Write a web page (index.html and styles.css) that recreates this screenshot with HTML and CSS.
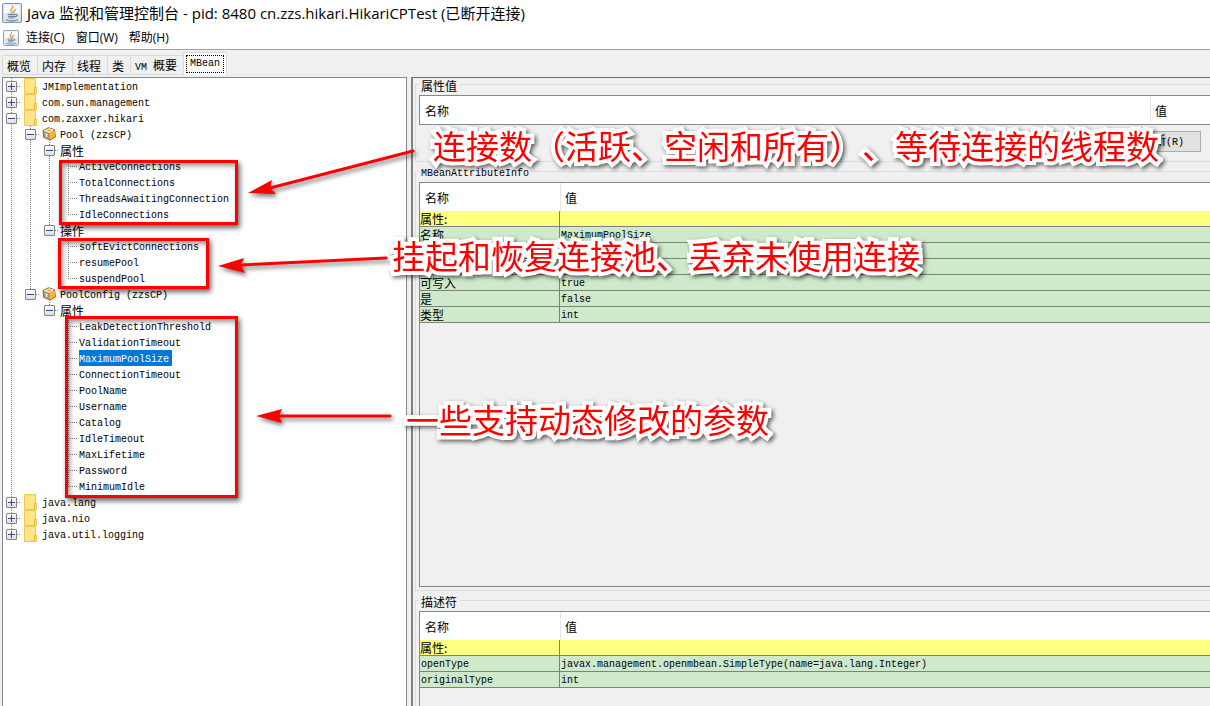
FILE: index.html
```
<!DOCTYPE html>
<html lang="zh-CN">
<head>
<meta charset="utf-8">
<title>Java 监视和管理控制台</title>
<link rel="stylesheet" href="styles.css">
</head>
<body>
<svg class="defs" aria-hidden="true">
  <symbol id="java" viewBox="0 0 18 18">
    <rect x=".5" y=".5" width="17" height="17" rx="1.500" fill="#dfe7ee" stroke="#8095a8"/>
    <rect x="1.5" y="1.5" width="15" height="8" fill="#f6f9fb"/>
    <path d="M9.500 9C5.500 6.500 10.500 5.500 9.500 2.500M11 9c-2-1.500 1-2 1.500-3.500" fill="none" stroke="#e8903b" stroke-width="1.200"/>
    <path d="M5 10.200h7M5.500 12h6M6 13.500h5M12 10.200c2.500-.7 2 2-.5 2.300M3.500 15c3 1.200 8 1.200 11 0" fill="none" stroke="#6283a0" stroke-width="1"/>
  </symbol>
  <symbol id="folder" viewBox="0 0 13 16">
    <path d="M.5 .5h11v9h1v6H.5z" fill="#ffe48c" stroke="#eec94b"/>
    <path d="M10.500 15.500v-6h2" fill="none" stroke="#e3b932"/>
  </symbol>
  <symbol id="bean" viewBox="0 0 13 13">
    <path d="M1 3.500L6 .8l5.500 1.700L12.500 9 7.500 12.300 1.500 9.500z" fill="#e9a13a" stroke="#8d6a35"/>
    <path d="M1.500 3.800l5.500 2v6.200L1.800 9.300z" fill="#9c927f"/>
    <path d="M7 5.800l4.800-2.500L12.200 8.700 7.300 11.800z" fill="#ffb32e"/>
    <path d="M3 3.500l3.500-1.800 3.500 1-3 2zM3 6l2 3M5.200 6.500L3.400 9" fill="none" stroke="#fff3d8"/>
  </symbol>
</svg>

<header class="titlebar"><svg class="app-icon"><use href="#java"/></svg><h1>Java 监视和管理控制台 - pid: 8480 cn.zzs.hikari.HikariCPTest (已断开连接)</h1></header>
<nav class="menubar">
  <svg class="menu-icon"><use href="#java"/></svg>
  <button>连接(C)</button><button>窗口(W)</button><button>帮助(H)</button>
</nav>
<div class="tabs" role="tablist">
  <button role="tab" class="tab">概览</button><button role="tab" class="tab">内存</button><button role="tab" class="tab">线程</button><button role="tab" class="tab">类</button><button role="tab" class="tab"><span class="mono">VM </span>概要</button><button role="tab" class="tab selected" aria-selected="true"><span class="mono focus">MBean</span></button>
</div>

<main class="content">
  <section class="tree-pane">
    <ul class="tree">
      <li><div class="row"><span class="joint"><button class="toggle plus" aria-label="展开"></button></span><svg class="folder"><use href="#folder"/></svg><span class="label">JMImplementation</span></div></li>
      <li><div class="row"><span class="joint"><button class="toggle plus" aria-label="展开"></button></span><svg class="folder"><use href="#folder"/></svg><span class="label">com.sun.management</span></div></li>
      <li><div class="row"><span class="joint"><button class="toggle" aria-label="折叠"></button></span><svg class="folder"><use href="#folder"/></svg><span class="label">com.zaxxer.hikari</span></div>
        <ul>
          <li><div class="row"><span class="joint"><button class="toggle" aria-label="折叠"></button></span><svg class="bean"><use href="#bean"/></svg><span class="label">Pool (zzsCP)</span></div>
            <ul>
              <li><div class="row"><span class="joint"><button class="toggle" aria-label="折叠"></button></span><span class="label cjk">属性</span></div>
                <ul>
                  <li><div class="row"><span class="joint leaf"></span><span class="label">ActiveConnections</span></div></li>
                  <li><div class="row"><span class="joint leaf"></span><span class="label">TotalConnections</span></div></li>
                  <li><div class="row"><span class="joint leaf"></span><span class="label">ThreadsAwaitingConnection</span></div></li>
                  <li><div class="row"><span class="joint leaf"></span><span class="label">IdleConnections</span></div></li>
                </ul>
              </li>
              <li><div class="row"><span class="joint"><button class="toggle" aria-label="折叠"></button></span><span class="label cjk">操作</span></div>
                <ul>
                  <li><div class="row"><span class="joint leaf"></span><span class="label">softEvictConnections</span></div></li>
                  <li><div class="row"><span class="joint leaf"></span><span class="label">resumePool</span></div></li>
                  <li><div class="row"><span class="joint leaf"></span><span class="label">suspendPool</span></div></li>
                </ul>
              </li>
            </ul>
          </li>
          <li><div class="row"><span class="joint"><button class="toggle" aria-label="折叠"></button></span><svg class="bean"><use href="#bean"/></svg><span class="label">PoolConfig (zzsCP)</span></div>
            <ul>
              <li><div class="row"><span class="joint"><button class="toggle" aria-label="折叠"></button></span><span class="label cjk">属性</span></div>
                <ul>
                  <li><div class="row"><span class="joint leaf"></span><span class="label">LeakDetectionThreshold</span></div></li>
                  <li><div class="row"><span class="joint leaf"></span><span class="label">ValidationTimeout</span></div></li>
                  <li><div class="row"><span class="joint leaf"></span><span class="label current">MaximumPoolSize</span></div></li>
                  <li><div class="row"><span class="joint leaf"></span><span class="label">ConnectionTimeout</span></div></li>
                  <li><div class="row"><span class="joint leaf"></span><span class="label">PoolName</span></div></li>
                  <li><div class="row"><span class="joint leaf"></span><span class="label">Username</span></div></li>
                  <li><div class="row"><span class="joint leaf"></span><span class="label">Catalog</span></div></li>
                  <li><div class="row"><span class="joint leaf"></span><span class="label">IdleTimeout</span></div></li>
                  <li><div class="row"><span class="joint leaf"></span><span class="label">MaxLifetime</span></div></li>
                  <li><div class="row"><span class="joint leaf"></span><span class="label">Password</span></div></li>
                  <li><div class="row"><span class="joint leaf"></span><span class="label">MinimumIdle</span></div></li>
                </ul>
              </li>
            </ul>
          </li>
        </ul>
      </li>
      <li><div class="row"><span class="joint"><button class="toggle plus" aria-label="展开"></button></span><svg class="folder"><use href="#folder"/></svg><span class="label">java.lang</span></div></li>
      <li><div class="row"><span class="joint"><button class="toggle plus" aria-label="展开"></button></span><svg class="folder"><use href="#folder"/></svg><span class="label">java.nio</span></div></li>
      <li><div class="row"><span class="joint"><button class="toggle plus" aria-label="展开"></button></span><svg class="folder"><use href="#folder"/></svg><span class="label">java.util.logging</span></div></li>
    </ul>
  </section>

  <section class="detail">
    <fieldset class="value-group">
      <legend>属性值</legend>
      <table class="value-table">
        <thead><tr><th>名称</th><th class="narrow">值</th></tr></thead>
      </table>
      <div class="actions"><button class="refresh">刷新<span class="mono">(R)</span></button></div>
    </fieldset>
    <fieldset class="info-group">
      <legend class="mono">MBeanAttributeInfo</legend>
      <div class="scroll">
        <table class="info-table">
          <thead><tr><th class="key">名称</th><th>值</th></tr></thead>
          <tbody>
            <tr class="heading"><td class="cjk">属性:</td><td></td></tr>
            <tr><td class="cjk">名称</td><td>MaximumPoolSize</td></tr>
            <tr><td class="cjk">说明</td><td>MaximumPoolSize</td></tr>
            <tr><td class="cjk">可读取</td><td>true</td></tr>
            <tr><td class="cjk">可写入</td><td>true</td></tr>
            <tr><td class="cjk">是</td><td>false</td></tr>
            <tr><td class="cjk">类型</td><td>int</td></tr>
          </tbody>
        </table>
      </div>
    </fieldset>
    <fieldset class="descriptor-group">
      <legend>描述符</legend>
      <div class="scroll">
        <table class="info-table">
          <thead><tr><th class="key">名称</th><th>值</th></tr></thead>
          <tbody>
            <tr class="heading"><td class="cjk">属性:</td><td></td></tr>
            <tr><td>openType</td><td>javax.management.openmbean.SimpleType(name=java.lang.Integer)</td></tr>
            <tr><td>originalType</td><td>int</td></tr>
          </tbody>
        </table>
      </div>
    </fieldset>
  </section>
</main>

<div class="frame frame-attributes"></div>
<div class="frame frame-operations"></div>
<div class="frame frame-config"></div>
<svg class="arrows" viewBox="0 0 420 440" aria-hidden="true">
  <g stroke="#f00" stroke-width="3" stroke-linecap="round">
    <path d="M270 188L413 151M242 265L386 258M279 416H390"/>
  </g>
  <g fill="#f00">
    <path d="M248 193L272 180L270 188L276 194z"/>
    <path d="M218 266L244 258L241 265L245 273z"/>
    <path d="M256 416L282 409L279 416L282 423z"/>
  </g>
</svg>
<p class="note note-attributes">连接数（活跃、空闲和所有）、等待连接的线程数</p>
<p class="note note-operations">挂起和恢复连接池、丢弃未使用连接</p>
<p class="note note-config">一些支持动态修改的参数</p>
</body>
</html>
```
FILE: styles.css
```
* { box-sizing: border-box; }

body {
  margin: 0;
  height: 100vh;
  display: flex;
  flex-direction: column;
  position: relative;
  overflow: hidden;
  background: #f0f0f0;
  color: #000;
  font: 12px/16px "Noto Sans CJK SC", sans-serif;
}

button { margin: 0; padding: 0; border: 0; background: none; color: inherit; font: inherit; }
.defs { position: absolute; width: 0; height: 0; }
.mono { font: 10px/16px "Liberation Mono", monospace; white-space: pre; }
.cjk { font: 12px/16px "Noto Sans CJK SC", sans-serif; }

/* Window chrome */
.titlebar { display: flex; align-items: center; gap: 5px; height: 26px; padding-left: 2px; background: #fff; }
.app-icon { width: 20px; height: 20px; }
.titlebar h1 { margin: 0; font: 15px/24px "Open Sans", "Noto Sans CJK SC", sans-serif; white-space: nowrap; }
.menubar { display: flex; align-items: center; gap: 11px; height: 24px; padding-left: 3px; background: #fff; border-bottom: 1px solid #a0a0a0; }
.menubar button { font-family: "Open Sans", "Noto Sans CJK SC", sans-serif; }
.menu-icon { width: 16px; height: 16px; margin-right: -4px; }

.tabs { display: flex; align-items: flex-end; height: 27px; padding: 2px 0 2px 2px; }
.tab { height: 20px; padding: 1px 6px 0 4px; border: 1px solid #d9d9d9; border-right: 0; }
.tab.selected { height: 23px; padding: 2px; background: #fff; border-right: 1px solid #d9d9d9; border-bottom: 0; }
.focus { display: block; padding: 0 3px; border: 1px dotted #000; }

/* Split content */
.content { flex: 1; min-height: 0; display: flex; gap: 4px; padding-left: 2px; }
.tree-pane { flex: 0 0 405px; background: #fff; border: 1px solid #828790; border-bottom: 0; overflow: hidden; }

.tree, .tree ul { list-style: none; margin: 0; padding: 0; }
.tree { font: 10px/16px "Liberation Mono", monospace; }
.tree ul { margin-left: 19px; }
.tree li { background: repeating-linear-gradient(#808080 0 1px, transparent 1px 2px) 8px 0 / 1px 100% no-repeat; }
.tree li:last-child { background-size: 1px 8px; }
.row { display: flex; align-items: center; height: 16px; white-space: nowrap; }
.joint {
  flex: 0 0 19px;
  height: 16px;
  display: flex;
  align-items: center;
  padding-left: 3px;
  background: repeating-linear-gradient(90deg, #808080 0 1px, transparent 1px 2px) 8px 8px / 10px 1px no-repeat;
}
.toggle {
  width: 11px;
  height: 11px;
  border: 1px solid #848484;
  border-radius: 1px;
  background: linear-gradient(#2b4b9b, #2b4b9b) center / 7px 1px no-repeat, linear-gradient(#fff, #ddd);
}
.toggle.plus {
  background: linear-gradient(#2b4b9b, #2b4b9b) center / 7px 1px no-repeat, linear-gradient(#2b4b9b, #2b4b9b) center / 1px 7px no-repeat, linear-gradient(#fff, #ddd);
}
.folder { width: 13px; height: 16px; margin: 0 5px 0 2px; }
.bean { width: 14px; height: 14px; margin: 0 4px 0 1px; }
.label { height: 16px; padding-top: 2px; }
.label.cjk { padding-top: 1px; }
.current { padding-right: 3px; background: #0078d7; color: #fff; }

.detail {
  flex: 1;
  min-width: 0;
  display: flex;
  flex-direction: column;
  gap: 3px;
  padding-left: 2px;
  border-top: 1px solid #696969;
  border-left: 2px solid #808080;
}
fieldset { min-width: 0; margin: 0; padding: 5px 0 3px 3px; border: 1px solid #dcdcdc; border-right: 0; }
legend { height: 12px; padding: 0 2px; line-height: 16px; }
legend.mono { line-height: 18px; }
.info-group { flex: 1; min-height: 0; }
.descriptor-group { flex: 0 0 112px; padding-bottom: 0; border-bottom: 0; }

table { width: 100%; table-layout: fixed; border-collapse: separate; border-spacing: 0; }
th { height: 28px; padding: 2px 5px 0; background: #fff; font-weight: normal; text-align: left; }
th + th { padding-left: 4px; border-left: 1px solid #e5e5e5; }
.narrow { width: 60px; }
.value-table { border: 1px solid #828790; border-right: 0; }
.actions { display: flex; justify-content: flex-end; padding: 6px 9px 6px 0; }
.refresh { height: 21px; padding: 0 16px; border: 1px solid #adadad; background: #e1e1e1; }

.scroll { height: 100%; border: 1px solid #828790; border-right: 0; overflow: hidden; }
.descriptor-group .scroll { border-bottom: 0; }
.key { width: 140px; }
.info-table td { height: 16px; padding: 2px 1px 0; background: #ceeacb; border-bottom: 1px solid #808080; font: 10px/13px "Liberation Mono", monospace; }
.info-table td:first-child { border-right: 1px solid #808080; }
.info-table td.cjk { padding: 0; font: 12px/15px "Noto Sans CJK SC", sans-serif; }
.info-table .heading td { background: #ffff80; }

/* Callouts laid over the window */
.frame { position: absolute; border: 3px solid #f00; box-shadow: 2px 3px 5px rgba(0, 0, 0, .6), inset 2px 3px 5px rgba(0, 0, 0, .4); }
.frame-attributes { left: 59px; top: 160px; width: 179px; height: 65px; }
.frame-operations { left: 58px; top: 238px; width: 151px; height: 51px; }
.frame-config { left: 65px; top: 316px; width: 173px; height: 182px; }
.arrows { position: absolute; left: 0; top: 0; width: 420px; height: 440px; pointer-events: none; filter: drop-shadow(2px 3px 2px rgba(0, 0, 0, .5)); }
.note {
  position: absolute;
  margin: 0;
  color: #f00;
  font: 33px/40px "Noto Sans CJK SC", sans-serif;
  font-weight: 400;
  text-spacing-trim: space-all;
  font-kerning: none;
  white-space: nowrap;
  -webkit-text-stroke: 8px #fff;
  paint-order: stroke fill;
  stroke-linejoin: round;
  filter: drop-shadow(2px 2px 2px rgba(0, 0, 0, .6));
}
.note-attributes { left: 433px; top: 125px; }
.note-operations { left: 392px; top: 235px; }
.note-config { left: 406px; top: 399px; }
```
